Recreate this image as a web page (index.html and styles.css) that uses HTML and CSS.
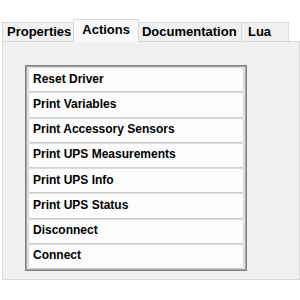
FILE: index.html
```html
<!DOCTYPE html>
<html lang="en">
<head>
    <meta charset="UTF-8">
    <title>Driver Actions</title>
    <link rel="stylesheet" href="styles.css">
</head>
<body>
    <div class="tabs">
        <div class="tab">Properties</div>
        <div class="tab active">Actions</div>
        <div class="tab docs">Documentation</div>
        <div class="tab lua">Lua</div>
    </div>
    <div class="panel">
        <div class="action-list">
            <button class="action">Reset Driver</button>
            <button class="action">Print Variables</button>
            <button class="action">Print Accessory Sensors</button>
            <button class="action">Print UPS Measurements</button>
            <button class="action">Print UPS Info</button>
            <button class="action">Print UPS Status</button>
            <button class="action">Disconnect</button>
            <button class="action">Connect</button>
        </div>
    </div>
</body>
</html>
```

FILE: styles.css
```css
* {
    box-sizing: border-box;
}

body {
    margin: 0;
    background-color: #ffffff;
    font-family: "Liberation Sans", Arial, sans-serif;
    color: #000;
}

.tabs {
    display: flex;
    align-items: flex-end;
    padding-top: 22px;
    padding-left: 2px;
    height: 41px;
}

.tab {
    height: 19px;
    line-height: 18px;
    padding: 0 4px;
    font-size: 13px;
    font-weight: bold;
    background-color: #f0f0f0;
    border: 1px solid #d9d9d9;
    border-bottom: none;
    margin-left: -1px;
}

.tab:first-child {
    margin-left: 0;
}

.tab.active {
    position: relative;
    z-index: 1;
    height: 23px;
    line-height: 20px;
    margin: 0 -2px -1px -3px;
    padding: 0 8px;
    background-color: #f9f9f9;
}

.tab.docs {
    min-width: 106px;
    padding-left: 5px;
}

.tab.lua {
    min-width: 48px;
    padding-left: 6px;
}

.panel {
    margin-left: 2px;
    width: 298px;
    height: 239px;
    padding: 23px 0 0 22px;
    background-color: #f0f0f0;
    border: 1px solid #d9d9d9;
}

.action-list {
    display: grid;
    grid-template-rows: repeat(8, 1fr);
    width: 222px;
    height: 206px;
    padding: 1px 2px;
    background-color: #e3e3e3;
    border: 1px solid #828282;
    box-shadow: inset 0 0 0 1px #a0a0a0;
}

.action {
    margin: 0;
    padding: 0 0 2px 4px;
    text-align: left;
    font-family: "Liberation Sans", Arial, sans-serif;
    font-size: 12px;
    font-weight: bold;
    color: #000;
    background-color: #fcfcfc;
    border: 1px solid #dcdcdc;
    border-bottom-color: #cfcfcf;
    border-radius: 3px;
}
```
